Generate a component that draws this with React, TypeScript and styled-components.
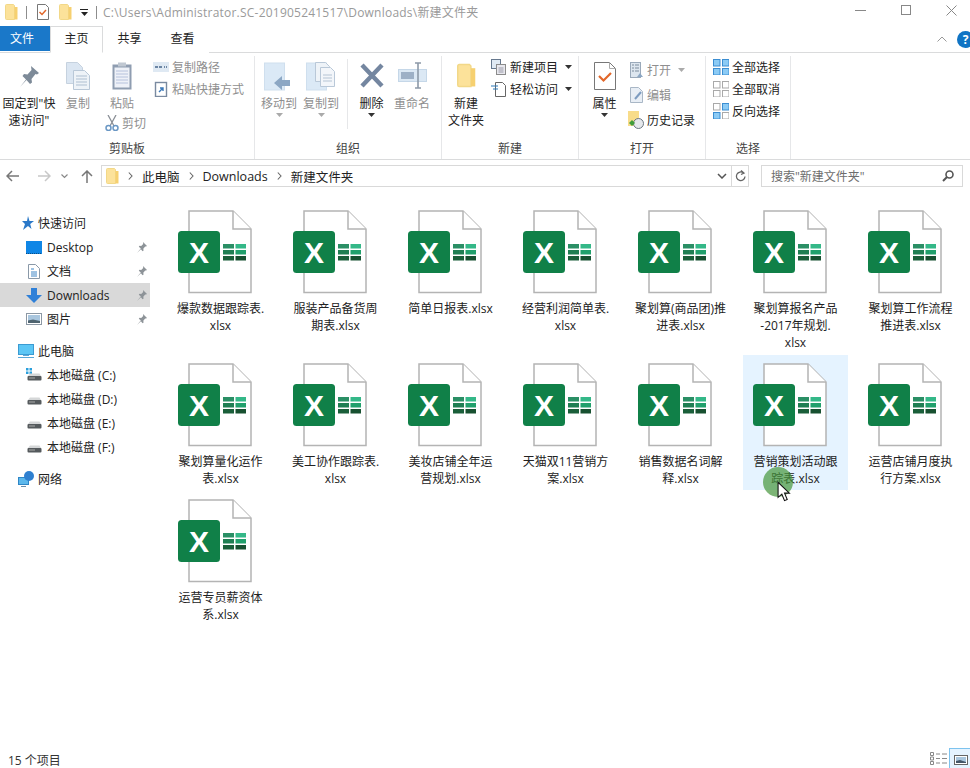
import styled, { createGlobalStyle } from 'styled-components';
import type { ReactNode } from 'react';

const GlobalStyle = createGlobalStyle`
  html, body { margin: 0; padding: 0; background: #fff; }
  body { font-family: "Open Sans", "Noto Sans CJK SC", sans-serif; font-size: 12px; color: #222; }
  * { box-sizing: border-box; }
  svg { display: block; flex: none; }
`;

/* ---------- icons ---------- */

function FolderIcon({ w = 13, h = 16 }: { w?: number; h?: number }) {
  return (
    <svg width={w} height={h} viewBox="0 0 13 16">
      <path d="M0.500 1.500a1 1 0 0 1 1-1h7l1 1v14h-8a1 1 0 0 1-1-1z" fill="#fce29a" stroke="#f2d888" />
      <path d="M9.500 3h3v12.500h-3z" fill="#f6d070" />
    </svg>
  );
}

function PropsIcon() {
  return (
    <svg width="22" height="28" viewBox="0 0 22 28">
      <path d="M0.500 0.500h15l6 6v21h-21z" fill="#fff" stroke="#777" />
      <path d="M15.500 0.500v6h6" fill="none" stroke="#aaa" />
      <path d="M5 14l4.500 4.500L17 11" fill="none" stroke="#e2672a" strokeWidth="2.200" />
    </svg>
  );
}

function PropsSmall() {
  return (
    <svg width="12" height="16" viewBox="0 0 12 16">
      <path d="M0.500 0.500h8l3 3v12h-11z" fill="#fff" stroke="#777" />
      <path d="M2.500 8l2.500 2.500 4-4.500" fill="none" stroke="#e2672a" strokeWidth="1.500" />
    </svg>
  );
}

function ChevronRight() {
  return (
    <svg width="5" height="8" viewBox="0 0 5 8"><path d="M0.800 0.500L4 4 0.800 7.500" fill="none" stroke="#666" strokeWidth="1.100" /></svg>
  );
}

function BigPin() {
  return (
    <svg width="22" height="24" viewBox="0 0 22 24" style={{ marginTop: 3 }}>
      <path d="M13 1l8 7-2 1.500-1.500-.5-4 5 .5 3.500-2 1.500-3.500-4L2 22l6-7.500L4.500 11 6 9l3.500.5 4-4.500z" fill="#7d8a98" />
    </svg>
  );
}

function PagesIcon({ tint = '#dbe6f2' }: { tint?: string }) {
  return (
    <svg width="24" height="28" viewBox="0 0 24 28">
      <path d="M0.500 0.500h11l5 5v16h-16z" fill={tint} stroke="#c6d2df" />
      <path d="M7.500 8.500h11l5 5v14h-16z" fill="#eef3f8" stroke="#b9c8d8" />
      {[14, 17, 20, 23].map(y => <path key={y} d={`M10 ${y}h11`} stroke="#aebfd1" />)}
    </svg>
  );
}

function ClipboardIcon() {
  return (
    <svg width="20" height="28" viewBox="0 0 20 28">
      <rect x="0.500" y="2.500" width="19" height="25" fill="#8f9db1" />
      <rect x="2.500" y="5.500" width="15" height="20" fill="#eef1f8" />
      <rect x="6" y="0.500" width="8" height="4" fill="#c0c8d2" />
      {[9, 12, 15, 18, 21].map(y => <path key={y} d={`M4 ${y}h12`} stroke="#b6c2dc" />)}
    </svg>
  );
}

function MoveIcon({ copy }: { copy?: boolean }) {
  return (
    <svg width="30" height="30" viewBox="0 0 30 30">
      <rect x="0.500" y="1" width="20" height="27" fill="#dbe9f6" stroke="#cfdfee" />
      {copy ? (
        <>
          <path d="M9.500 0.500h10l4 4v15h-14z" fill="#eef3f8" stroke="#b9c8d8" />
          <path d="M14.500 5.500h10l4 4v15h-14z" fill="#f3f6fa" stroke="#b9c8d8" />
          <path d="M17 13h9M17 16h9M17 19h9" stroke="#b5c4d4" />
        </>
      ) : (
        <path d="M10 21l8-7v4h8v6h-8v4z" fill="#8ca7c4" />
      )}
    </svg>
  );
}

function DeleteIcon() {
  return (
    <svg width="26" height="27" viewBox="0 0 26 27">
      <path d="M3 3l20 21M23 3L3 24" stroke="#7486a0" strokeWidth="4.400" />
    </svg>
  );
}

function RenameIcon() {
  return (
    <svg width="29" height="27" viewBox="0 0 29 27">
      <rect x="0.500" y="7.500" width="28" height="12" fill="#dbe8f4" stroke="#c5d7e8" />
      <rect x="3" y="10" width="13" height="7" fill="#9db0c6" />
      <path d="M17 1h6m-3 0v25m-3 0h6" stroke="#8d99a8" strokeWidth="1.600" fill="none" />
    </svg>
  );
}

const Pin = () => (
  <svg width="11" height="11" viewBox="0 0 11 11">
    <path d="M7 0l4 4-1 .6-.8-.2-1.900 2.300.3 1.800-1 .7L4.900 7.200 1 11l3.800-4.400L2.800 4.800l.7-1 1.700.3 2-2.100z" fill="#8d9398" />
  </svg>
);

const Caret = ({ color = '#333' }: { color?: string }) => (
  <svg width="7" height="4" viewBox="0 0 7 4"><path d="M0 0h7L3.500 4z" fill={color} /></svg>
);

function DiskIcon({ system }: { system?: boolean }) {
  return (
    <svg width="16" height="16" viewBox="0 0 16 16">
      {system && <path d="M0 1h2.500v2.500H0zM3.500 1H6v2.500H3.500zM0 4.500h2.500V7H0zM3.500 4.500H6V7H3.500z" fill="#2a9fdc" />}
      <path d="M2 9l2-2.500h9.500L15 9z" fill="#d5d7d8" />
      <rect x="1.500" y="9" width="14" height="4.500" rx="1" fill="#555a5d" />
      <path d="M3 11h6" stroke="#aaa" />
    </svg>
  );
}

function ExcelIcon() {
  return (
    <svg width="74" height="84" viewBox="0 0 74 84">
      <path d="M11 1h44l18 18v63.500H11z" fill="#fff" stroke="#b4b4b4" strokeWidth="1.500" />
      <path d="M55 1v18h18" fill="#fff" stroke="#b4b4b4" strokeWidth="1.500" />
      <rect x="0" y="21" width="42" height="42" rx="3.500" fill="#108048" />
      <text x="21" y="53" textAnchor="middle" fontFamily="Liberation Sans, sans-serif" fontWeight="700" fontSize="30" fill="#fff">X</text>
      <rect x="45" y="34" width="11" height="4.500" fill="#2a8f65" />
      <rect x="57.500" y="34" width="10.500" height="4.500" fill="#34b888" />
      <rect x="45" y="40" width="11" height="4.500" fill="#1f7f53" />
      <rect x="57.500" y="40" width="10.500" height="4.500" fill="#21a06c" />
      <rect x="45" y="46" width="11" height="4.500" fill="#1a5f3a" />
      <rect x="57.500" y="46" width="10.500" height="4.500" fill="#175030" />
    </svg>
  );
}

function SelectIcon({ pattern }: { pattern: 'all' | 'none' | 'invert' }) {
  const cells = [[0, 0], [9, 0], [0, 9], [9, 9]];
  const filled = (i: number) => pattern === 'all' || (pattern === 'invert' && (i === 1 || i === 2));
  return (
    <svg width="16" height="16" viewBox="0 0 16 16">
      {cells.map(([x, y], i) => (
        <rect key={i} x={x + 0.5} y={y + 0.5} width="6.500" height="6.500"
          fill={filled(i) ? '#8ccbf5' : '#fff'}
          stroke={filled(i) ? '#3c8ed2' : '#a9a9a9'} />
      ))}
    </svg>
  );
}

/* ---------- layout ---------- */

const Page = styled.div`
  width: 970px;
  height: 768px;
  position: relative;
  display: flex;
  flex-direction: column;
  overflow: hidden;
  background: #fff;
`;

const TitleBar = styled.div`
  height: 24px;
  display: flex;
  align-items: center;
  padding-left: 5px;
`;

const QatSep = styled.span<{ $m: string }>`
  width: 1px;
  height: 13px;
  background: #8d8d8d;
  margin: ${p => p.$m};
`;

const QatGap = styled.span`
  width: 10px;
`;

const QatDrop = styled.span`
  width: 8px;
  margin: 0 8px;
  border-top: 1px solid #222;
  padding-top: 2px;
  display: flex;
  justify-content: center;
`;

const TitleText = styled.div`
  color: #9a9a9a;
  white-space: nowrap;
  letter-spacing: 0.22px;
  margin-left: -1px;
`;

const WindowButtons = styled.div`
  margin-left: auto;
  display: flex;
  align-items: center;
  gap: 35px;
  padding-right: 13px;
  margin-top: -4px;
`;

const TabRow = styled.div`
  height: 29px;
  display: flex;
  align-items: flex-end;
  border-bottom: 1px solid #dadbdc;
`;

const FileTab = styled.div`
  width: 50px;
  height: 25px;
  margin-bottom: 1px;
  padding: 0 6px 2px 0;
  background: #1a78c9;
  color: #fff;
  display: flex;
  align-items: center;
  justify-content: center;
`;

const Tab = styled.div<{ $active?: boolean }>`
  width: 53px;
  height: 27px;
  margin-bottom: -1px;
  padding-bottom: 3px;
  display: flex;
  align-items: center;
  justify-content: center;
  background: #fff;
  border: 1px solid ${p => (p.$active ? '#dadbdc' : 'transparent')};
  border-bottom: 1px solid ${p => (p.$active ? '#fff' : 'transparent')};
`;

const RibbonRight = styled.div`
  margin-left: auto;
  margin-right: -4px;
  height: 26px;
  display: flex;
  align-items: center;
  gap: 10px;
`;

const HelpDot = styled.span`
  width: 17px;
  height: 17px;
  border-radius: 50%;
  background: #1074c4;
  color: #fff;
  font-size: 12px;
  font-weight: 700;
  line-height: 17px;
  text-align: center;
`;

const Ribbon = styled.div`
  height: 107px;
  display: flex;
  border-bottom: 1px solid #dadbdc;
  background: #fff;
`;

const Group = styled.div<{ $w: number }>`
  width: ${p => p.$w}px;
  flex: none;
  display: flex;
  flex-direction: column;
  border-right: 1px solid #e6e7e9;
  margin-top: 3px;
`;

const GroupBody = styled.div<{ $pl?: number }>`
  flex: 1;
  display: flex;
  padding-left: ${p => p.$pl ?? 0}px;
`;

const GroupLabel = styled.div`
  height: 21px;
  line-height: 22px;
  text-align: center;
  color: #444;
`;

const BigButton = styled.div<{ $w: number; $dim?: boolean }>`
  width: ${p => p.$w}px;
  flex: none;
  display: flex;
  flex-direction: column;
  align-items: center;
  color: ${p => (p.$dim ? '#8f8f8f' : '#222')};
  line-height: 17px;
  text-align: center;
`;

const BigIcon = styled.div`
  height: 39px;
  padding-top: 6px;
  display: flex;
  align-items: flex-start;
  justify-content: center;
`;

const CaretRow = styled.div`
  margin-top: 1px;
`;

const StackCol = styled.div<{ $w?: number; $gap?: number; $pt?: number; $ml?: number }>`
  ${p => (p.$w ? `width: ${p.$w}px; flex: none;` : '')}
  display: flex;
  flex-direction: column;
  gap: ${p => p.$gap ?? 0}px;
  padding-top: ${p => p.$pt ?? 0}px;
  margin-left: ${p => p.$ml ?? 0}px;
`;

const SmallItem = styled.div<{ $dim?: boolean }>`
  height: 22px;
  display: flex;
  align-items: center;
  gap: 3px;
  white-space: nowrap;
  color: ${p => (p.$dim ? '#8f8f8f' : '#222')};
`;

const ItemCaret = styled.span`
  margin-left: 4px;
`;

const VSep = styled.span`
  width: 1px;
  height: 70px;
  margin: 3px 6px 0 7px;
  background: #e6e7e9;
`;

const AddressRow = styled.div`
  height: 35px;
  display: flex;
  align-items: center;
  padding: 0 7px 3px 6px;
`;

const NavGroup = styled.div`
  width: 95px;
  display: flex;
  align-items: center;
  gap: 12px;
`;

const AddressBox = styled.div`
  width: 648px;
  height: 22px;
  border: 1px solid #d9d9d9;
  display: flex;
  align-items: center;
  padding-left: 4px;
`;

const Crumb = styled.span`
  white-space: nowrap;
  font-size: 12.500px;
`;

const CrumbSep = styled.span`
  margin: 0 9px;
`;

const AddressEnd = styled.div`
  margin-left: auto;
  height: 100%;
  display: flex;
  align-items: center;
`;

const RefreshCell = styled.div`
  width: 17px;
  height: 100%;
  border-left: 1px solid #d9d9d9;
  display: flex;
  align-items: center;
  justify-content: center;
`;

const SearchBox = styled.div`
  width: 202px;
  height: 22px;
  margin-left: 12px;
  border: 1px solid #d9d9d9;
  display: flex;
  align-items: center;
  justify-content: space-between;
  padding: 0 8px 0 9px;
  color: #6d6d6d;
`;

const Main = styled.div`
  flex: 1;
  display: flex;
  min-height: 0;
`;

const Sidebar = styled.nav`
  width: 150px;
  flex: none;
  padding-top: 16px;
  display: flex;
  flex-direction: column;
  gap: 8px;
`;

const NavSection = styled.div`
  display: flex;
  flex-direction: column;
`;

const NavRow = styled.div<{ $sub?: boolean; $active?: boolean }>`
  height: 24px;
  display: flex;
  align-items: center;
  padding-left: ${p => (p.$sub ? 26 : 18)}px;
  gap: ${p => (p.$sub ? 5 : 4)}px;
  background: ${p => (p.$active ? '#d9d9d9' : 'transparent')};
  white-space: nowrap;
`;

const NavIcon = styled.span`
  width: 16px;
  display: flex;
  justify-content: center;
`;

const NavPin = styled.span`
  margin-left: auto;
  margin-right: 3px;
`;

const Files = styled.div`
  flex: 1;
  padding: 7px 0 0 18px;
  display: grid;
  grid-template-columns: repeat(7, 105px);
  grid-auto-rows: min-content;
  column-gap: 10px;
  row-gap: 1px;
  align-content: start;
`;

const FileCell = styled.div<{ $selected?: boolean }>`
  padding: 8px 0 3px;
  display: flex;
  flex-direction: column;
  align-items: center;
  background: ${p => (p.$selected ? '#e5f3ff' : 'transparent')};
`;

const FileIconSlot = styled.div`
  width: 74px;
  height: 83px;
  margin-bottom: 7px;
  align-self: flex-start;
  margin-left: 10px;
`;

const FileLine = styled.div`
  height: 17px;
  line-height: 17px;
  white-space: nowrap;
  text-align: center;
`;

const StatusBar = styled.div`
  height: 22px;
  display: flex;
  align-items: flex-end;
  justify-content: space-between;
  padding-left: 8px;
  line-height: 14px;
  color: #333;
`;

const ViewSwitch = styled.div`
  display: flex;
  align-items: flex-start;
  gap: 2px;
  margin-right: -1px;
  height: 20px;
`;

const ViewList = styled.div`
  padding-top: 4px;
`;

const ViewActive = styled.div`
  width: 22px;
  height: 22px;
  background: #e5f3ff;
  border: 1.500px solid #7dc3ee;
  padding: 6px 0 0 4px;
`;

const ClickHalo = styled.div`
  position: absolute;
  left: 763px;
  top: 467px;
  width: 30px;
  height: 30px;
  border-radius: 50%;
  background: rgba(70, 150, 60, 0.7);
`;

const CursorMark = styled.div`
  position: absolute;
  left: 777px;
  top: 481px;
`;

/* ---------- data ---------- */

const files: string[][] = [
  ['爆款数据跟踪表.', 'xlsx'],
  ['服装产品备货周', '期表.xlsx'],
  ['简单日报表.xlsx'],
  ['经营利润简单表.', 'xlsx'],
  ['聚划算(商品团)推', '进表.xlsx'],
  ['聚划算报名产品', '-2017年规划.', 'xlsx'],
  ['聚划算工作流程', '推进表.xlsx'],
  ['聚划算量化运作', '表.xlsx'],
  ['美工协作跟踪表.', 'xlsx'],
  ['美妆店铺全年运', '营规划.xlsx'],
  ['天猫双11营销方', '案.xlsx'],
  ['销售数据名词解', '释.xlsx'],
  ['营销策划活动跟', '踪表.xlsx'],
  ['运营店铺月度执', '行方案.xlsx'],
  ['运营专员薪资体', '系.xlsx'],
];

function Big({ w, dim, icon, label, caret }: { w: number; dim?: boolean; icon: ReactNode; label: string[]; caret?: string }) {
  return (
    <BigButton $w={w} $dim={dim}>
      <BigIcon>{icon}</BigIcon>
      {label.map(l => <div key={l}>{l}</div>)}
      {caret && <CaretRow><Caret color={caret} /></CaretRow>}
    </BigButton>
  );
}

export default function App() {
  return (
    <Page>
      <GlobalStyle />
      <TitleBar>
        <FolderIcon />
        <QatSep $m="0 10px 0 8px" />
        <PropsSmall />
        <QatGap />
        <FolderIcon />
        <QatDrop><Caret color="#222" /></QatDrop>
        <QatSep $m="0 7px 0 0" />
        <TitleText>C:\Users\Administrator.SC-201905241517\Downloads\新建文件夹</TitleText>
        <WindowButtons>
          <svg width="11" height="11" viewBox="0 0 11 11"><path d="M0 5.500h11" stroke="#888" /></svg>
          <svg width="10" height="10" viewBox="0 0 10 10"><rect x="0.500" y="0.500" width="9" height="9" fill="none" stroke="#888" /></svg>
          <svg width="11" height="11" viewBox="0 0 11 11"><path d="M0.500 0.500l10 10M10.500 0.500l-10 10" stroke="#888" /></svg>
        </WindowButtons>
      </TitleBar>

      <TabRow>
        <FileTab>文件</FileTab>
        <Tab $active>主页</Tab>
        <Tab>共享</Tab>
        <Tab>查看</Tab>
        <RibbonRight>
          <svg width="10" height="6" viewBox="0 0 10 6"><path d="M0.500 5.500L5 1l4.500 4.500" fill="none" stroke="#999" /></svg>
          <HelpDot>?</HelpDot>
        </RibbonRight>
      </TabRow>

      <Ribbon>
        <Group $w={255}>
          <GroupBody $pl={2}>
            <Big w={54} icon={<BigPin />} label={['固定到"快', '速访问"']} />
            <Big w={44} dim icon={<PagesIcon />} label={['复制']} />
            <StackCol $w={50}>
              <Big w={44} dim icon={<ClipboardIcon />} label={['粘贴']} />
              <SmallItem $dim>
                <svg style={{ marginLeft: 5 }} width="14" height="16" viewBox="0 0 14 16">
                  <path d="M3 0l6 11M11 0L5 11" stroke="#8a8f96" strokeWidth="1.300" />
                  <circle cx="3.500" cy="13" r="2.500" fill="none" stroke="#6a97c4" strokeWidth="1.500" />
                  <circle cx="10.500" cy="13" r="2.500" fill="none" stroke="#6a97c4" strokeWidth="1.500" />
                </svg>
                剪切
              </SmallItem>
            </StackCol>
            <StackCol $ml={3}>
              <SmallItem $dim>
                <svg width="16" height="10" viewBox="0 0 16 10"><rect width="16" height="10" fill="#dfe9f3" /><path d="M2 5h3M6 5h3M11 5h1M13 5h1" stroke="#6c86a5" strokeWidth="2" /></svg>
                复制路径
              </SmallItem>
              <SmallItem $dim>
                <svg width="16" height="16" viewBox="0 0 16 16"><rect x="2.500" y="1.500" width="11" height="14" fill="#fff" stroke="#7a8aa0" strokeWidth="1.400" /><path d="M6 11l4-4M7 7h3v3" fill="none" stroke="#3b78b8" strokeWidth="1.400" /></svg>
                粘贴快捷方式
              </SmallItem>
            </StackCol>
          </GroupBody>
          <GroupLabel>剪贴板</GroupLabel>
        </Group>

        <Group $w={187}>
          <GroupBody $pl={1}>
            <Big w={46} dim icon={<MoveIcon />} label={['移动到']} caret="#aaa" />
            <Big w={38} dim icon={<MoveIcon copy />} label={['复制到']} caret="#aaa" />
            <VSep />
            <Big w={35} icon={<DeleteIcon />} label={['删除']} caret="#333" />
            <Big w={46} dim icon={<RenameIcon />} label={['重命名']} />
          </GroupBody>
          <GroupLabel>组织</GroupLabel>
        </Group>

        <Group $w={137}>
          <GroupBody $pl={2}>
            <Big w={44} icon={<FolderIcon w={19} h={27} />} label={['新建', '文件夹']} />
            <StackCol $ml={3}>
              <SmallItem>
                <svg width="16" height="16" viewBox="0 0 16 16"><rect x="0.500" y="0.500" width="9" height="9" fill="#dfe9f3" stroke="#66788e" /><rect x="5.500" y="5.500" width="9" height="10" fill="#e8e8ee" stroke="#8b8b8b" /><path d="M7.500 9h5M7.500 11h5M7.500 13h5" stroke="#9a9aa8" /></svg>
                新建项目
                <ItemCaret><Caret /></ItemCaret>
              </SmallItem>
              <SmallItem>
                <svg width="16" height="16" viewBox="0 0 16 16"><path d="M4.500 1.500h7l3 3v11h-10z" fill="#fff" stroke="#666" /><path d="M0 5h7M2 8h5" stroke="#2a78b8" /></svg>
                轻松访问
                <ItemCaret><Caret /></ItemCaret>
              </SmallItem>
            </StackCol>
          </GroupBody>
          <GroupLabel>新建</GroupLabel>
        </Group>

        <Group $w={127}>
          <GroupBody $pl={2}>
            <Big w={47} icon={<PropsIcon />} label={['属性']} caret="#333" />
            <StackCol $gap={3} $pt={3}>
              <SmallItem $dim>
                <svg width="16" height="16" viewBox="-2 0 16 16"><rect x="0.500" y="0.500" width="10" height="15" fill="#dde6ef" stroke="#9aa9ba" /><path d="M2 3h2M2 6h2M2 9h2M5 3h4M5 6h4M5 9h4" stroke="#7d8c9d" /><path d="M7 15l3-4 3 4z" fill="#8ca7c4" /></svg>
                打开
                <ItemCaret><Caret color="#aaa" /></ItemCaret>
              </SmallItem>
              <SmallItem $dim>
                <svg width="16" height="16" viewBox="-2 0 16 16"><path d="M0.500 0.500h8l4 4v11h-12z" fill="#e8eef5" stroke="#a9b7c6" /><path d="M5 12l6-7" stroke="#7d9cc0" strokeWidth="2" /></svg>
                编辑
              </SmallItem>
              <SmallItem>
                <svg width="16" height="18" viewBox="0 0 16 18"><rect x="0" y="0" width="11" height="15" fill="#f8dc8a" /><circle cx="10.500" cy="12.500" r="5" fill="#e5e8ec" stroke="#6b7680" /><path d="M1 12l3-3 3 3-3 3z" fill="#3f9d3b" /></svg>
                历史记录
              </SmallItem>
            </StackCol>
          </GroupBody>
          <GroupLabel>打开</GroupLabel>
        </Group>

        <Group $w={85}>
          <GroupBody $pl={7}>
            <StackCol>
              <SmallItem><SelectIcon pattern="all" />全部选择</SmallItem>
              <SmallItem><SelectIcon pattern="none" />全部取消</SmallItem>
              <SmallItem><SelectIcon pattern="invert" />反向选择</SmallItem>
            </StackCol>
          </GroupBody>
          <GroupLabel>选择</GroupLabel>
        </Group>
      </Ribbon>

      <AddressRow>
        <NavGroup>
          <svg width="13" height="12" viewBox="0 0 13 12"><path d="M6 1L1 6l5 5M1 6h12" fill="none" stroke="#777" strokeWidth="1.500" /></svg>
          <svg style={{ marginLeft: 7 }} width="13" height="12" viewBox="0 0 13 12"><path d="M7 1l5 5-5 5M12 6H0" fill="none" stroke="#c8c8c8" strokeWidth="1.500" /></svg>
          <svg style={{ marginLeft: -2 }} width="7" height="5" viewBox="0 0 7 5"><path d="M0.500 0.500L3.500 3.500l3-3" fill="none" stroke="#888" strokeWidth="1.200" /></svg>
          <svg style={{ marginLeft: 1 }} width="12" height="13" viewBox="0 0 12 13"><path d="M1 6l5-5 5 5M6 1v12" fill="none" stroke="#777" strokeWidth="1.500" /></svg>
        </NavGroup>
        <AddressBox>
          <FolderIcon />
          <CrumbSep><ChevronRight /></CrumbSep>
          <Crumb>此电脑</Crumb>
          <CrumbSep><ChevronRight /></CrumbSep>
          <Crumb>Downloads</Crumb>
          <CrumbSep><ChevronRight /></CrumbSep>
          <Crumb>新建文件夹</Crumb>
          <AddressEnd>
            <svg style={{ marginRight: 4 }} width="10" height="6" viewBox="0 0 10 6"><path d="M1 1l4 4 4-4" fill="none" stroke="#555" strokeWidth="1.500" /></svg>
            <RefreshCell>
              <svg width="11" height="12" viewBox="0 0 11 12"><path d="M8.500 3A4.300 4.300 0 1 0 10 6.500M6 0.500l3 2.500-3 1.500" fill="none" stroke="#666" strokeWidth="1.300" /></svg>
            </RefreshCell>
          </AddressEnd>
        </AddressBox>
        <SearchBox>
          搜索"新建文件夹"
          <svg width="12" height="12" viewBox="0 0 12 12"><circle cx="7.500" cy="4.500" r="3.500" fill="none" stroke="#555" strokeWidth="1.600" /><path d="M5 7l-4 4" stroke="#555" strokeWidth="2" /></svg>
        </SearchBox>
      </AddressRow>

      <Main>
        <Sidebar>
          <NavSection>
            <NavRow>
              <NavIcon>
                <svg width="16" height="15" viewBox="0 0 16 15"><path d="M10 0l1.500 5H16l-3.800 3 1.300 5-3.500-3-5 4 2-6-3-3h5z" fill="#2a78c8" /></svg>
              </NavIcon>
              快速访问
            </NavRow>
            <NavRow $sub>
              <NavIcon><svg width="16" height="13" viewBox="0 0 16 13"><rect width="16" height="13" fill="#0f86e6" /><path d="M0 12.500h16" stroke="#0a4f86" strokeDasharray="1 1" /></svg></NavIcon>
              Desktop
              <NavPin><Pin /></NavPin>
            </NavRow>
            <NavRow $sub>
              <NavIcon><svg width="12" height="15" viewBox="0 0 12 15"><path d="M0.500 0.500h7l4 4v10h-11z" fill="#fff" stroke="#8a99a8" /><path d="M3 5h3M3 8h6M3 10h6M3 12h6" stroke="#3f86c6" /></svg></NavIcon>
              文档
              <NavPin><Pin /></NavPin>
            </NavRow>
            <NavRow $sub $active>
              <NavIcon><svg width="16" height="15" viewBox="0 0 16 15"><path d="M5 0h6v7h5l-8 8-8-8h5z" fill="#2f80d8" /></svg></NavIcon>
              Downloads
              <NavPin><Pin /></NavPin>
            </NavRow>
            <NavRow $sub>
              <NavIcon><svg width="16" height="12" viewBox="0 0 16 12"><rect x="0.500" y="0.500" width="15" height="11" fill="#fff" stroke="#8c98a4" /><rect x="2" y="2" width="12" height="8" fill="#a9c6de" /><path d="M2 10V7.500l5-1 7 1.500v2z" fill="#4f6470" /></svg></NavIcon>
              图片
              <NavPin><Pin /></NavPin>
            </NavRow>
          </NavSection>
          <NavSection>
            <NavRow>
              <NavIcon><svg width="16" height="15" viewBox="0 0 16 15"><rect x="0.500" y="0.500" width="15" height="10" fill="#5cc6f5" stroke="#3b9bd2" /><path d="M0 13.500h16M5 11.500h6" stroke="#5aa7d8" /></svg></NavIcon>
              此电脑
            </NavRow>
            <NavRow $sub><NavIcon><DiskIcon system /></NavIcon>本地磁盘 (C:)</NavRow>
            <NavRow $sub><NavIcon><DiskIcon /></NavIcon>本地磁盘 (D:)</NavRow>
            <NavRow $sub><NavIcon><DiskIcon /></NavIcon>本地磁盘 (E:)</NavRow>
            <NavRow $sub><NavIcon><DiskIcon /></NavIcon>本地磁盘 (F:)</NavRow>
          </NavSection>
          <NavSection>
            <NavRow>
              <NavIcon><svg width="16" height="16" viewBox="0 0 16 16"><rect x="0.500" y="6.500" width="10" height="7" fill="#5cb8ec" stroke="#2f86c6" /><path d="M3 15.500h5" stroke="#6a8ca8" /><circle cx="11" cy="5" r="5" fill="#2f80d0" /></svg></NavIcon>
              网络
            </NavRow>
          </NavSection>
        </Sidebar>

        <Files>
          {files.map((lines, i) => (
            <FileCell key={lines[0]} $selected={i === 12}>
              <FileIconSlot><ExcelIcon /></FileIconSlot>
              {lines.map(l => <FileLine key={l}>{l}</FileLine>)}
            </FileCell>
          ))}
        </Files>
      </Main>

      <StatusBar>
        <span>15 个项目</span>
        <ViewSwitch>
          <ViewList>
            <svg width="17" height="13" viewBox="0 0 17 13"><path d="M0.500 0.500h3v3h-3zM0.500 5h3v3h-3zM0.500 9.500h3v3h-3z" fill="none" stroke="#888" /><path d="M6 2h4M12 2h5M6 6.500h4M12 6.500h5M6 11h4M12 11h5" stroke="#888" /></svg>
          </ViewList>
          <ViewActive>
            <svg width="14" height="10" viewBox="0 0 14 10"><rect x="0.500" y="0.500" width="13" height="9" fill="#fff" stroke="#666" /><rect x="2" y="2" width="10" height="6" fill="#a9c6de" /><path d="M2 8V6l4-1 6 2v1z" fill="#456" /></svg>
          </ViewActive>
        </ViewSwitch>
      </StatusBar>

      <ClickHalo />
      <CursorMark>
        <svg width="14" height="21" viewBox="0 0 13 19"><path d="M1 1v14l3.500-3 2.500 6 2.500-1-2.500-6h4.500z" fill="#fff" stroke="#111" strokeWidth="1" /></svg>
      </CursorMark>
    </Page>
  );
}
